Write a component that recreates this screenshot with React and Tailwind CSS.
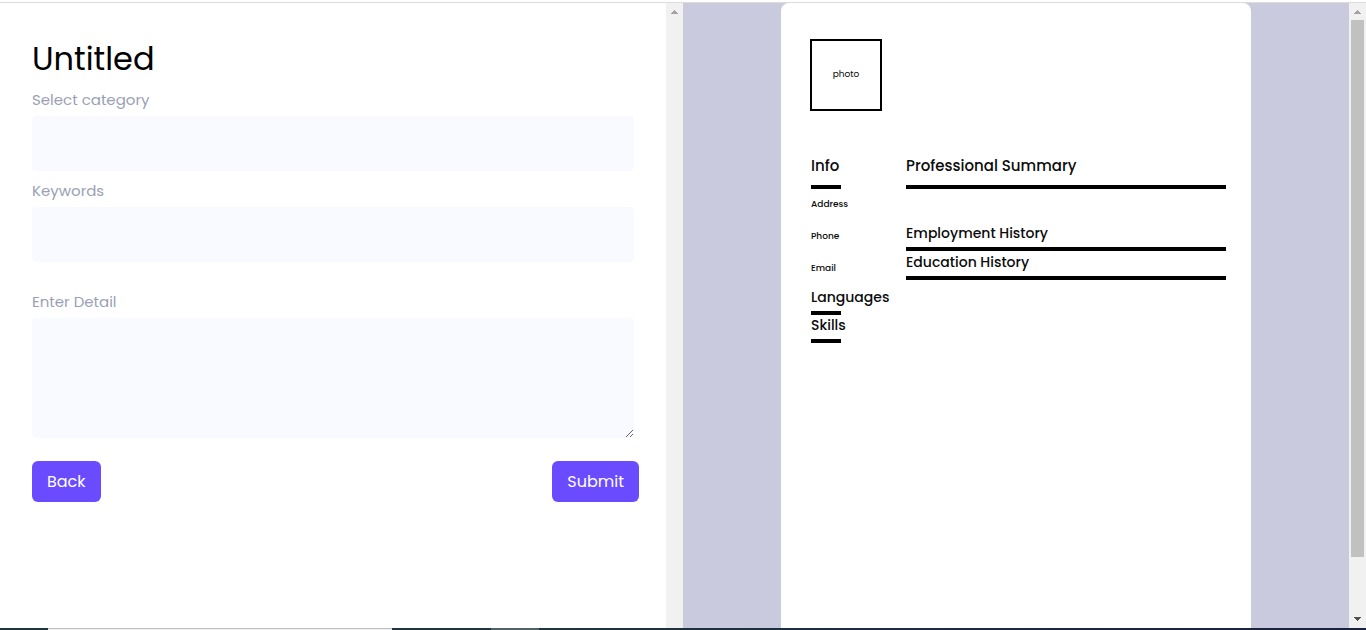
function Arrow({ down = false, dark = false }) {
  return (
    <svg viewBox="0 0 7 4" className={`h-1 w-[7px] ${dark ? 'fill-[#505050]' : 'fill-[#a3a3a3]'}`} shapeRendering="crispEdges" aria-hidden="true">
      {down ? <path d="M0 0h7v1H6v1H5v1H4v1H3V3H2V2H1V1H0z" /> : <path d="M3 0h1v1h1v1h1v1h1v1H0V3h1V2h1V1h1z" />}
    </svg>
  );
}

function Field({ id, label, className = '', children }) {
  return (
    <div className={className}>
      <label htmlFor={id} className="mb-1 block text-[15px] leading-6 text-[#9a9fb5]">{label}</label>
      {children}
    </div>
  );
}

function Section({ title, short = false }) {
  return (
    <section>
      <h2 className="text-[14px] leading-5 font-medium whitespace-nowrap">{title}</h2>
      <div className={`mt-1 h-1 bg-black ${short ? 'w-[30px]' : 'w-full'}`} />
    </section>
  );
}

function LeadSection({ title, short = false }) {
  return (
    <section>
      <h2 className="text-[15px] leading-[22px] font-medium whitespace-nowrap">{title}</h2>
      <div className={`mt-2 h-1 bg-black ${short ? 'w-[30px]' : 'w-full'}`} />
    </section>
  );
}

const box = 'block w-full rounded bg-[#f9faff] px-4 outline-none';
const button = 'h-[41px] rounded-md bg-[#6a4bff] px-[15px] text-[16px] text-white';

function Editor() {
  return (
    <form className="min-w-0 flex-1 px-8 pt-8" onSubmit={(e) => e.preventDefault()}>
      <h1 className="mb-[5px] text-[32px] leading-[48px] font-normal">Untitled</h1>
      <Field id="category" label="Select category">
        <select id="category" className={`${box} h-[55px] appearance-none`} defaultValue="">
          <option value="" />
        </select>
      </Field>
      <Field id="keywords" label="Keywords" className="mt-2">
        <input id="keywords" type="text" className={`${box} h-[55px]`} />
      </Field>
      <Field id="detail" label="Enter Detail" className="mt-7">
        <textarea id="detail" className={`${box} h-[120px] resize py-3`} />
      </Field>
      <div className="mt-[23px] -mr-[5px] flex justify-between">
        <button type="button" className={button}>Back</button>
        <button type="submit" className={button}>Submit</button>
      </div>
    </form>
  );
}

function Resume() {
  return (
    <article className="w-[470px] rounded-t-lg bg-white pt-9 text-[#0b0b0b]">
      <div className="ml-[29px] flex size-[72px] items-center justify-center border-2 border-black pb-0.5 text-[9px] leading-[14px]">photo</div>
      <div className="mt-11 flex pr-[25px] pl-[30px]">
        <div className="w-[95px]">
          <LeadSection title="Info" short />
          <div className="mt-2 mb-3 flex flex-col gap-[18px] text-[9px] leading-[14px] font-medium">
            <p>Address</p>
            <p>Phone</p>
            <p>Email</p>
          </div>
          <Section title="Languages" short />
          <Section title="Skills" short />
        </div>
        <div className="min-w-0 flex-1">
          <LeadSection title="Professional Summary" />
          <div className="mt-[34px] flex flex-col gap-px">
            <Section title="Employment History" />
            <Section title="Education History" />
          </div>
        </div>
      </div>
    </article>
  );
}

export default function App() {
  return (
    <div className="flex h-screen flex-col bg-white pt-0.5 font-['Poppins','Inter',sans-serif] text-black">
      <main className="grid min-h-0 flex-1 grid-cols-2 border-t border-[#dcdcdc]">
        <div className="flex min-h-0 overflow-hidden">
          <Editor />
          <div className="flex w-[17px] flex-col items-center bg-[#f1f1f1] pt-[7px]">
            <Arrow />
          </div>
        </div>
        <div className="flex min-h-0 overflow-hidden">
          <div className="flex flex-1 justify-center bg-[#cacadf]">
            <Resume />
          </div>
          <div className="flex w-[17px] flex-col items-center bg-[#f1f1f1] pt-[7px] pb-[7px]">
            <Arrow />
            <div className="mt-1.5 flex w-[13px] flex-1 flex-col">
              <div className="h-[90%] w-full bg-[#c1c1c1]" />
            </div>
            <Arrow down dark />
          </div>
        </div>
      </main>
      <footer className="flex h-0.5 shrink-0 bg-[#1c2b3d]">
        <div className="w-12 bg-[#1f3540]" />
        <div className="w-[344px] border-t border-[#bdbdbd] bg-[#f0f0f0]" />
        <div className="w-[99px] bg-[#1f3540]" />
        <div className="w-12 bg-[#4e6268]" />
        <div className="flex-1 bg-linear-to-r from-[#1f3540] to-[#18233d]" />
      </footer>
    </div>
  );
}
